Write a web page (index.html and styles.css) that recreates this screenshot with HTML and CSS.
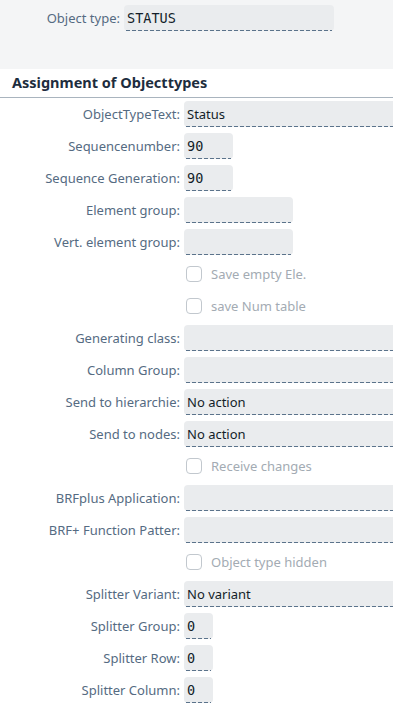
FILE: index.html
```html
<!DOCTYPE html>
<html lang="en">
<head>
    <meta charset="UTF-8">
    <meta name="viewport" content="width=device-width, initial-scale=1.0">
    <title>Assignment of Objecttypes</title>
    <link rel="stylesheet" href="styles.css">
</head>
<body>
    <div class="top">
        <div class="row head-row">
            <span class="lbl">Object type:</span>
            <div class="field mono w-head">STATUS</div>
        </div>
    </div>

    <div class="section">
        <h2 class="title">Assignment of Objecttypes</h2>

        <div class="form">
            <div class="row"><span class="lbl">ObjectTypeText:</span><div class="field wide">Status</div></div>
            <div class="row"><span class="lbl">Sequencenumber:</span><div class="field mono w-s">90</div></div>
            <div class="row"><span class="lbl">Sequence Generation:</span><div class="field mono w-s">90</div></div>
            <div class="row"><span class="lbl">Element group:</span><div class="field w-m"></div></div>
            <div class="row"><span class="lbl">Vert. element group:</span><div class="field w-m"></div></div>
            <div class="row"><span class="lbl"></span><div class="check"><span class="box"></span>Save empty Ele.</div></div>
            <div class="row"><span class="lbl"></span><div class="check"><span class="box"></span>save Num table</div></div>
            <div class="row"><span class="lbl">Generating class:</span><div class="field wide"></div></div>
            <div class="row"><span class="lbl">Column Group:</span><div class="field wide"></div></div>
            <div class="row"><span class="lbl">Send to hierarchie:</span><div class="field wide">No action</div></div>
            <div class="row"><span class="lbl">Send to nodes:</span><div class="field wide">No action</div></div>
            <div class="row"><span class="lbl"></span><div class="check"><span class="box"></span>Receive changes</div></div>
            <div class="row"><span class="lbl">BRFplus Application:</span><div class="field wide"></div></div>
            <div class="row"><span class="lbl">BRF+ Function Patter:</span><div class="field wide"></div></div>
            <div class="row"><span class="lbl"></span><div class="check"><span class="box"></span>Object type hidden</div></div>
            <div class="row"><span class="lbl">Splitter Variant:</span><div class="field wide">No variant</div></div>
            <div class="row"><span class="lbl">Splitter Group:</span><div class="field mono w-xs">0</div></div>
            <div class="row"><span class="lbl">Splitter Row:</span><div class="field mono w-xs">0</div></div>
            <div class="row"><span class="lbl">Splitter Column:</span><div class="field mono w-xs">0</div></div>
        </div>
    </div>
</body>
</html>
```

FILE: styles.css
```css
* {
    margin: 0;
    padding: 0;
    box-sizing: border-box;
}

body {
    font-family: 'Noto Sans', 'Liberation Sans', Arial, sans-serif;
    font-size: 13px;
    color: #131e29;
    background: #ffffff;
    overflow: hidden;
}

.top {
    background: #f4f5f6;
    height: 69px;
    padding-top: 5px;
}

.row {
    display: grid;
    grid-template-columns: 180px 1fr;
    column-gap: 4px;
    height: 26px;
    margin-bottom: 6px;
    align-items: center;
    justify-items: start;
}

.head-row {
    grid-template-columns: 120px 1fr;
}

.lbl {
    justify-self: end;
    text-align: right;
    color: #556b82;
    white-space: nowrap;
    line-height: 26px;
}

.field {
    position: relative;
    height: 26px;
    line-height: 26px;
    padding: 0 3px;
    background: #eaecee;
    border-radius: 4px;
    white-space: nowrap;
    color: #131e29;
}

.field::after {
    content: '';
    position: absolute;
    left: 2px;
    right: 2px;
    bottom: 0;
    height: 1px;
    background: repeating-linear-gradient(90deg, #5b738b 0 4px, transparent 4px 6px);
}

.mono {
    font-family: 'DejaVu Sans Mono', 'Liberation Mono', monospace;
    font-size: 13.5px;
}

.wide {
    justify-self: stretch;
    border-radius: 4px 0 0 4px;
}

.wide::after {
    right: 0;
}

.w-head { width: 210px; }
.w-m { width: 109px; }
.w-s { width: 49px; }
.w-xs { width: 29px; }

.section {
    background: #ffffff;
}

.title {
    height: 29px;
    padding: 2px 0 0 12px;
    font-size: 14.5px;
    font-weight: bold;
    line-height: 22px;
    color: #1d2d3e;
    border-bottom: 1px solid #a9b4be;
}

.form {
    padding-top: 3px;
}

.check {
    display: flex;
    align-items: center;
    gap: 9px;
    padding-left: 2px;
    color: #a3abb3;
}

.box {
    width: 16px;
    height: 16px;
    border: 1px solid #c2c8ce;
    border-radius: 4px;
    background: #ffffff;
}
```
